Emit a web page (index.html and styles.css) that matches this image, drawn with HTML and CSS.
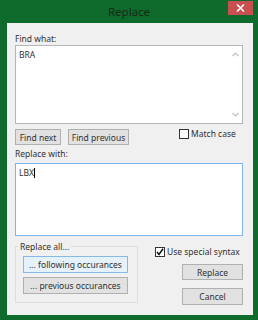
FILE: index.html
```html
<!DOCTYPE html>
<html lang="en">

<head>
    <meta charset="UTF-8">
    <meta name="viewport" content="width=device-width, initial-scale=1.0">
    <link rel="stylesheet" href="styles.css">
    <title>Replace</title>
</head>

<body>
    <div class="janela">
        <div class="titulo">
            <span></span>
            <span class="nome">Replace</span>
            <span class="fechar">
                <svg width="9" height="8" viewBox="0 0 9 8">
                    <path d="M1 0.5 L8 7.5 M8 0.5 L1 7.5" stroke="#fff" stroke-width="1.6" />
                </svg>
            </span>
        </div>
        <div class="cliente">
            <div class="legenda">Find what:</div>
            <div class="campo busca">
                <span class="valor">BRA</span>
                <div class="rolagem">
                    <svg width="7" height="5" viewBox="0 0 7 5">
                        <path d="M0.5 4 L3.5 1 L6.5 4" fill="none" stroke="#c2c2c2" stroke-width="1.2" />
                    </svg>
                    <svg width="7" height="5" viewBox="0 0 7 5">
                        <path d="M0.5 1 L3.5 4 L6.5 1" fill="none" stroke="#c2c2c2" stroke-width="1.2" />
                    </svg>
                </div>
            </div>
            <div class="linha">
                <button class="botao proximo">Find next</button>
                <button class="botao anterior">Find previous</button>
                <label class="opcao maiusculas"><span class="caixa"></span>Match case</label>
            </div>
            <div class="legenda substituir">Replace with:</div>
            <div class="campo troca">
                <span class="valor">LBX</span><span class="cursor"></span>
            </div>
            <div class="rodape">
                <fieldset class="grupo">
                    <legend>Replace all...</legend>
                    <button class="botao largo padrao">... following occurances</button>
                    <button class="botao largo">... previous occurances</button>
                </fieldset>
                <div class="lateral">
                    <label class="opcao"><span class="caixa">
                            <svg width="8" height="8" viewBox="0 0 8 8">
                                <path d="M1 4 L3 6.5 L7 0.8" fill="none" stroke="#111" stroke-width="1.5" />
                            </svg>
                        </span>Use special syntax</label>
                    <button class="botao acao">Replace</button>
                    <button class="botao acao cancelar">Cancel</button>
                </div>
            </div>
        </div>
    </div>
</body>

</html>
```

FILE: styles.css
```css
* {
    margin: 0;
    padding: 0;
    box-sizing: border-box;
    font-family: 'Noto Sans', sans-serif;
}

body {
    background: #0e6b2c;
}

.janela {
    width: 258px;
    height: 320px;
    background: #0e6b2c;
}

.titulo {
    height: 23px;
    display: grid;
    grid-template-columns: 1fr auto 1fr;
}

.nome {
    font-size: 11.5px;
    line-height: 24px;
    color: #162a19;
}

.fechar {
    justify-self: end;
    width: 25px;
    height: 14px;
    margin: 1px 5px 0 0;
    background: #c75050;
    display: flex;
    align-items: center;
    justify-content: center;
}

.cliente {
    margin-left: 7px;
    width: 246px;
    height: 292px;
    background: #f0f0f0;
    padding: 10px 10px 0 8px;
    font-size: 8.5px;
    color: #303030;
}

.legenda {
    line-height: 12px;
    height: 12px;
}

.substituir {
    margin-top: 2px;
    line-height: 14px;
    height: 14px;
}

.campo {
    background: #fff;
    border: 1px solid #b4b6bb;
    display: flex;
}

.busca {
    height: 79px;
}

.valor {
    line-height: 12px;
    padding: 3px 0 0 3px;
}

.rolagem {
    margin-left: auto;
    width: 16px;
    display: flex;
    flex-direction: column;
    justify-content: space-between;
    align-items: center;
    padding: 6px 0 6px 2px;
}

.troca {
    margin-top: 2px;
    height: 73px;
    border-color: #7eb4ea;
}

.cursor {
    width: 1px;
    height: 10px;
    margin-top: 4px;
    background: #000;
}

.linha {
    margin-top: 5px;
    height: 16px;
    display: flex;
    align-items: flex-start;
}

.botao {
    height: 16px;
    background: #e1e1e1;
    border: 1px solid #b0b0b0;
    font-size: 8.5px;
    color: #303030;
}

.proximo {
    width: 46px;
}

.anterior {
    width: 61px;
    margin-left: 7px;
}

.opcao {
    display: flex;
    align-items: center;
    gap: 2px;
    line-height: 10px;
}

.maiusculas {
    margin-left: 50px;
}

.caixa {
    width: 10px;
    height: 10px;
    background: #fff;
    border: 1px solid #333;
    display: flex;
    align-items: center;
    justify-content: center;
}

.rodape {
    margin-top: 4px;
    display: flex;
}

.grupo {
    width: 123px;
    height: 63px;
    border: 1px solid #dcdcdc;
    padding: 3px 0 0 7px;
    display: flex;
    flex-direction: column;
    gap: 4px;
}

.grupo legend {
    font-size: 8.5px;
    line-height: 13px;
    padding: 0 2px;
    margin-left: -5px;
}

.largo {
    width: 105px;
    height: 17px;
}

.padrao {
    background: #e5f1fb;
    border-color: #86b9e8;
}

.lateral {
    margin-left: 17px;
    width: 88px;
    padding-top: 7px;
    display: flex;
    flex-direction: column;
}

.acao {
    align-self: flex-end;
    width: 61px;
    margin-top: 7px;
}

.cancelar {
    height: 17px;
    margin-top: 8px;
}
```
